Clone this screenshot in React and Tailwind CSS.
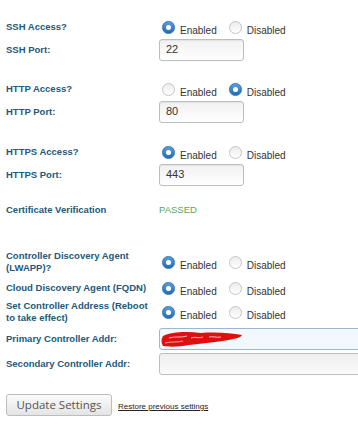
import React from "react";

const labelCls =
  "pr-[3px] text-[9.5px] font-bold leading-[12px] text-[#22597a]";

function Radio({ checked }) {
  if (checked) {
    return (
      <span className="flex h-[13px] w-[13px] items-center justify-center rounded-full border border-[#2f74b5] bg-gradient-to-b from-[#5a9fdc] to-[#1f6cb5] shadow-[0_0_1px_rgba(0,0,0,0.3)]">
        <span className="block h-[5px] w-[5px] rounded-full bg-white" />
      </span>
    );
  }
  return (
    <span className="block h-[13px] w-[13px] rounded-full border border-[#c4c4c4] bg-gradient-to-b from-[#ececec] to-white" />
  );
}

function Toggle({ on }) {
  return (
    <div className="flex items-center text-[10px] text-[#333]">
      <span className="ml-[3px] block">
        <Radio checked={on} />
      </span>
      <span className="ml-[5px] translate-y-[3px]">Enabled</span>
      <span className="ml-[12px] block">
        <Radio checked={!on} />
      </span>
      <span className="ml-[5px] translate-y-[3px]">Disabled</span>
    </div>
  );
}

function Row({ label, h, className = "", children }) {
  return (
    <div
      className={`grid grid-cols-[153px_1fr] items-center ${h} ${className}`}
    >
      <div className={labelCls}>{label}</div>
      <div className="flex items-center">{children}</div>
    </div>
  );
}

function PortInput({ value }) {
  return (
    <div className="flex h-[22px] w-[85px] items-center rounded-[3px] border border-[#bdbdbd] bg-gradient-to-b from-[#f1f1f1] to-white pl-[6px] text-[11px] text-[#333] shadow-[inset_0_1px_1px_rgba(0,0,0,0.06)]">
      {value}
    </div>
  );
}

export default function App() {
  return (
    <div
      className="h-[425px] w-[358px] overflow-hidden bg-white pl-[6px] pt-[16px]"
      style={{ fontFamily: '"Liberation Sans", Arial, sans-serif' }}
    >
      <Row label="SSH Access?" h="h-[22px]">
        <Toggle on />
      </Row>
      <Row label="SSH Port:" h="h-[23px]">
        <PortInput value="22" />
      </Row>

      <Row label="HTTP Access?" h="h-[22px]" className="mt-[17px]">
        <Toggle on={false} />
      </Row>
      <Row label="HTTP Port:" h="h-[23px]">
        <PortInput value="80" />
      </Row>

      <Row label="HTTPS Access?" h="h-[22px]" className="mt-[18px]">
        <Toggle on />
      </Row>
      <Row label="HTTPS Port:" h="h-[23px]">
        <PortInput value="443" />
      </Row>

      <Row label="Certificate Verification" h="h-[22px]" className="mt-[13px]">
        <span className="text-[9.5px] text-[#55a855]">PASSED</span>
      </Row>

      <Row
        label="Controller Discovery Agent (LWAPP)?"
        h="h-[28px]"
        className="mt-[27px]"
      >
        <Toggle on />
      </Row>
      <Row label="Cloud Discovery Agent (FQDN)" h="h-[22px]" className="mt-[1px]">
        <Toggle on />
      </Row>
      <Row
        label="Set Controller Address (Reboot to take effect)"
        h="h-[24px]"
        className="mt-[1px]"
      >
        <Toggle on />
      </Row>

      <Row label="Primary Controller Addr:" h="h-[22px]" className="mt-[4px]">
        <div className="relative h-[22px] w-[220px] shrink-0 rounded-[3px] border border-[#9cb8d0] bg-[#f3f8fc]">
          {/* red redaction scribble */}
          <svg
            className="absolute left-[1px] top-[2px]"
            width="82"
            height="17"
            viewBox="0 0 82 17"
          >
            <path
              d="M2 5 C10 1 25 0 40 2 C55 1 70 2 81 4 C80 7 72 8 62 10 C52 11 40 13 28 14 C18 16 8 16 2 15 C0 12 0 8 2 5 Z"
              fill="#e00f0f"
            />
            <path
              d="M8 7 C14 5 20 7 26 5 M30 7 C34 5 38 8 42 6 M48 6 C52 5 56 7 60 6"
              stroke="#f6b8b8"
              strokeWidth="1"
              fill="none"
            />
            <path
              d="M4 12 C10 10 16 12 22 10"
              stroke="#ff9a9a"
              strokeWidth="1.2"
              fill="none"
            />
          </svg>
        </div>
      </Row>
      <Row label="Secondary Controller Addr:" h="h-[22px]" className="mt-[3px]">
        <div className="h-[22px] w-[220px] shrink-0 rounded-[3px] border border-[#bdbdbd] bg-gradient-to-b from-[#efefef] to-[#fafafa]" />
      </Row>

      <div className="mt-[19px] flex items-center">
        <button
          className="flex h-[22px] w-[106px] items-center justify-center rounded-[3px] border border-[#bdbdbd] bg-gradient-to-b from-[#fbfbfb] to-[#e4e4e4] text-[11.5px] text-[#555]"
          style={{ fontFamily: '"Open Sans", "DejaVu Sans", sans-serif' }}
        >
          Update Settings
        </button>
        <a className="ml-[6px] translate-y-[2px] text-[8px] text-[#222] underline">
          Restore previous settings
        </a>
      </div>
    </div>
  );
}
